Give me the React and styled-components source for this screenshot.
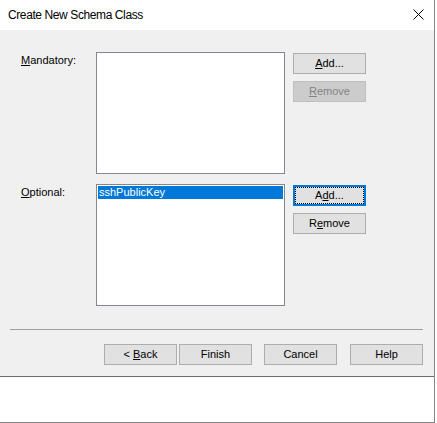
import React from "react";
import styled, { createGlobalStyle } from "styled-components";

const GlobalStyle = createGlobalStyle`
  html, body {
    margin: 0;
    padding: 0;
    background: #ffffff;
  }
  body {
    font-family: "Liberation Sans", Arial, sans-serif;
    font-size: 11px;
    color: #000;
  }
`;

const optionalItems = ["sshPublicKey"];

function Mnemonic({ text, at }) {
  return (
    <>
      {text.slice(0, at)}
      <u>{text[at]}</u>
      {text.slice(at + 1)}
    </>
  );
}

export default function App() {
  return (
    <Window>
      <GlobalStyle />
      <TitleBar>
        <Title>Create New Schema Class</Title>
        <CloseButton>
          <svg width="11" height="11" viewBox="0 0 11 11">
            <path d="M0.5 0.5 L10.5 10.5 M10.5 0.5 L0.5 10.5" stroke="#000" strokeWidth="1" fill="none" />
          </svg>
        </CloseButton>
      </TitleBar>
      <Body>
        <Fields>
          <Label>
            <Mnemonic text="Mandatory:" at={0} />
          </Label>
          <ListBox />
          <ButtonColumn>
            <Button>
              <Mnemonic text="Add..." at={0} />
            </Button>
            <Button disabled>
              <Mnemonic text="Remove" at={0} />
            </Button>
          </ButtonColumn>

          <Label>
            <Mnemonic text="Optional:" at={0} />
          </Label>
          <ListBox>
            {optionalItems.map((item) => (
              <ListItem key={item} selected>
                {item}
              </ListItem>
            ))}
          </ListBox>
          <ButtonColumn>
            <Button focused>
              <Mnemonic text="Add..." at={1} />
            </Button>
            <Button>
              <Mnemonic text="Remove" at={1} />
            </Button>
          </ButtonColumn>
        </Fields>
        <Separator />
        <Footer>
          <NavGroup>
            <Button>
              &lt; <Mnemonic text="Back" at={0} />
            </Button>
            <Button>Finish</Button>
          </NavGroup>
          <Button>Cancel</Button>
          <Button>Help</Button>
        </Footer>
      </Body>
      <Below />
    </Window>
  );
}

////////////////////////// CSS //////////////////////////
const Window = styled.div`
  width: 434px;
  height: 422px;
  border-right: 1px solid #858585;
  border-bottom: 1px solid #858585;
  display: flex;
  flex-direction: column;
  background: #ffffff;
`;

const TitleBar = styled.div`
  height: 30px;
  flex: none;
  display: flex;
  align-items: center;
  justify-content: space-between;
  padding: 0 10px 0 8px;
  background: #ffffff;
`;

const Title = styled.span`
  font-size: 12px;
  letter-spacing: -0.4px;
  color: #000;
  margin-top: -1px;
`;

const CloseButton = styled.span`
  display: flex;
  width: 11px;
  height: 11px;
  margin-top: -1px;
`;

const Body = styled.div`
  flex: none;
  height: 347px;
  box-sizing: border-box;
  background: #f0f0f0;
  border-bottom: 1px solid #6e6e6e;
  padding: 22px 11px 11px 10px;
  display: flex;
  flex-direction: column;
`;

const Fields = styled.div`
  display: grid;
  grid-template-columns: 67px 189px 73px;
  grid-auto-rows: 122px;
  column-gap: 8px;
  row-gap: 10px;
  padding-left: 11px;
`;

const Label = styled.div`
  line-height: 13px;
  padding-top: 2px;
  color: #000;
`;

const ListBox = styled.div`
  background: #ffffff;
  border: 1px solid #828790;
  padding: 1px;
  box-sizing: border-box;
`;

const ListItem = styled.div`
  height: 13px;
  line-height: 13px;
  padding-left: 1px;
  background: ${(p) => (p.selected ? "#0078d7" : "transparent")};
  color: ${(p) => (p.selected ? "#ffffff" : "#000")};
`;

const ButtonColumn = styled.div`
  display: flex;
  flex-direction: column;
  gap: 7px;
  padding-top: 1px;
`;

const Button = styled.button`
  width: 73px;
  height: 21px;
  box-sizing: border-box;
  padding: 0;
  font-family: "Liberation Sans", Arial, sans-serif;
  font-size: 11px;
  line-height: 13px;
  color: ${(p) => (p.disabled ? "#838383" : "#000")};
  background: ${(p) => (p.disabled ? "#cccccc" : "#e1e1e1")};
  border: ${(p) =>
    p.focused ? "2px solid #0078d7" : p.disabled ? "1px solid #bfbfbf" : "1px solid #adadad"};
  outline: ${(p) => (p.focused ? "1px dotted #000" : "none")};
  outline-offset: -3px;
  text-align: center;
  flex: none;
`;

const Separator = styled.div`
  height: 0;
  border-top: 1px solid #a0a0a0;
  margin-top: 23px;
`;

const Footer = styled.div`
  display: flex;
  justify-content: flex-end;
  gap: 13px;
  margin-top: 14px;
`;

const NavGroup = styled.div`
  display: flex;
  gap: 2px;
  margin-right: -1px;
`;

const Below = styled.div`
  flex: 1;
  background: #ffffff;
`;
